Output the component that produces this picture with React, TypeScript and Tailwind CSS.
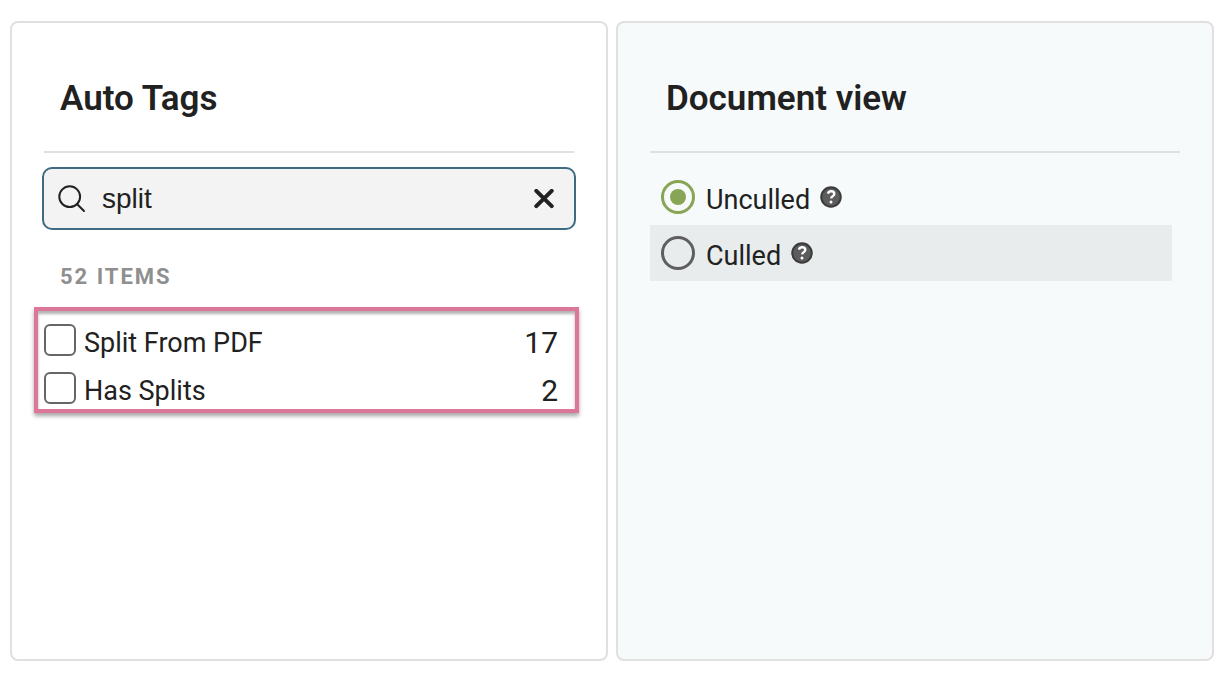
import React, { useState } from "react";

const tags = [
  { id: "split-from-pdf", label: "Split From PDF", count: 17 },
  { id: "has-splits", label: "Has Splits", count: 2 },
];

const views = [
  { id: "unculled", label: "Unculled" },
  { id: "culled", label: "Culled" },
];

function PanelHeader({ title }: { title: string }) {
  return (
    <header className="border-b-2 border-[#e0e0e0] px-4 pt-14 pb-8">
      <h2 className="text-[35px] leading-10 font-semibold">{title}</h2>
    </header>
  );
}

function SearchIcon() {
  return (
    <svg
      className="size-7 shrink-0"
      viewBox="0 0 28 28"
      fill="none"
      stroke="currentColor"
      strokeWidth="2"
      strokeLinecap="round"
      aria-hidden="true"
    >
      <circle cx="11.7" cy="11.7" r="10.4" />
      <path d="M19.2 19.2L26 26" />
    </svg>
  );
}

function ClearIcon() {
  return (
    <svg
      className="size-5"
      viewBox="0 0 20 20"
      fill="none"
      stroke="currentColor"
      strokeWidth="4"
      strokeLinecap="round"
      aria-hidden="true"
    >
      <path d="M2.3 1.8L17.7 17.2M17.7 1.8L2.3 17.2" />
    </svg>
  );
}

function HelpIcon() {
  return (
    <svg className="size-[22px]" viewBox="0 0 22 22" aria-hidden="true">
      <circle cx="11" cy="11" r="9.75" fill="#5c5c5c" stroke="#3a3a3a" strokeWidth="2" />
      <path
        d="M7.9 7.6C8.5 5.9 9.6 5.3 11.2 5.3C13 5.3 14.3 6.3 14.3 7.9C14.3 10 11.3 10.2 11.1 12.4"
        fill="none"
        stroke="#fff"
        strokeWidth="2.4"
      />
      <circle cx="11" cy="16" r="1.5" fill="#fff" />
    </svg>
  );
}

function AutoTags() {
  const [query, setQuery] = useState("split");

  return (
    <section className="rounded-lg border-2 border-[#e0e0e0] bg-white px-8">
      <PanelHeader title="Auto Tags" />
      <div className="-mx-0.5 mt-3.5 flex items-center rounded-[10px] border-2 border-[#3f6b82] bg-[#f3f3f3] py-[9px] pr-5 pl-3.5">
        <SearchIcon />
        <input
          type="text"
          aria-label="Search tags"
          value={query}
          onChange={(e) => setQuery(e.target.value)}
          className="h-[41px] min-w-0 flex-1 bg-transparent pl-4 font-['Liberation_Sans',sans-serif] text-[28px] outline-none"
        />
        <button type="button" aria-label="Clear search" onClick={() => setQuery("")}>
          <ClearIcon />
        </button>
      </div>
      <p className="mt-[31px] px-4 text-[22px] leading-8 font-bold tracking-[2px] text-[#8f8f8f]">
        52 ITEMS
      </p>
      <ul className="mt-3.5 -mr-[5px] -ml-2.5 flex flex-col gap-4 border-4 border-[#dc7799] pt-[13px] pr-[17px] pb-[5px] pl-1.5 shadow-[0_3px_4px_rgba(0,0,0,0.35),inset_0_3px_3px_rgba(0,0,0,0.3)]">
        {tags.map((tag) => (
          <li key={tag.id} className="flex h-8 items-center">
            <input
              id={tag.id}
              type="checkbox"
              className="size-8 shrink-0 appearance-none rounded-md border-2 border-[#666] bg-white checked:bg-[#88a455]"
            />
            <label htmlFor={tag.id} className="flex-1 pt-1.5 pl-2 text-[27px] leading-8">
              {tag.label}
            </label>
            <span className="pt-1.5 text-[30px] leading-8">{tag.count}</span>
          </li>
        ))}
      </ul>
    </section>
  );
}

function DocumentView() {
  const [view, setView] = useState("unculled");

  return (
    <section className="rounded-lg border-2 border-[#e0e0e0] bg-[#f6fafb] px-8">
      <PanelHeader title="Document view" />
      <div role="radiogroup" aria-label="Document view" className="mt-4 mr-2">
        {views.map(({ id, label }) => (
          <div key={id} className="flex h-14 items-center pl-[11px] even:bg-[#e8ecec]">
            <input
              id={id}
              type="radio"
              name="view"
              checked={view === id}
              onChange={() => setView(id)}
              className="flex size-[34px] shrink-0 appearance-none items-center justify-center rounded-full border-[3px] border-[#5f5f5f] checked:border-[#88a455] checked:before:size-4 checked:before:rounded-full checked:before:bg-[#88a455]"
            />
            <label htmlFor={id} className="pt-1.5 pl-[11px] text-[27px] leading-8">
              {label}
            </label>
            <button type="button" aria-label={`About ${label}`} className="ml-2.5">
              <HelpIcon />
            </button>
          </div>
        ))}
      </div>
    </section>
  );
}

export default function App() {
  return (
    <main className="grid min-h-screen grid-cols-2 gap-2 bg-white pt-[21px] pr-1.5 pb-[15px] pl-2.5 font-['Roboto',sans-serif] text-[#212121]">
      <AutoTags />
      <DocumentView />
    </main>
  );
}
